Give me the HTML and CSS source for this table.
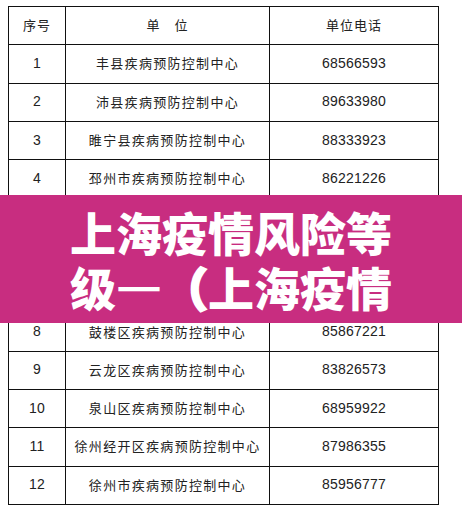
FILE: index.html
```html
<!DOCTYPE html>
<html lang="zh-CN">
<head>
<meta charset="utf-8">
<link rel="stylesheet" href="styles.css">
</head>
<body>
<div class="page">
  <table class="units">
    <colgroup>
      <col class="c-no">
      <col class="c-name">
      <col class="c-tel">
    </colgroup>
    <tr><th>序号</th><th>单　位</th><th>单位电话</th></tr>
    <tr><td class="num">1</td><td class="name">丰县疾病预防控制中心</td><td class="num">68566593</td></tr>
    <tr><td class="num">2</td><td class="name">沛县疾病预防控制中心</td><td class="num">89633980</td></tr>
    <tr><td class="num">3</td><td class="name">睢宁县疾病预防控制中心</td><td class="num">88333923</td></tr>
    <tr><td class="num">4</td><td class="name">邳州市疾病预防控制中心</td><td class="num">86221226</td></tr>
    <tr><td class="num"></td><td class="name"></td><td class="num"></td></tr>
    <tr><td class="num"></td><td class="name"></td><td class="num"></td></tr>
    <tr><td class="num"></td><td class="name"></td><td class="num"></td></tr>
    <tr><td class="num">8</td><td class="name">鼓楼区疾病预防控制中心</td><td class="num">85867221</td></tr>
    <tr><td class="num">9</td><td class="name">云龙区疾病预防控制中心</td><td class="num">83826573</td></tr>
    <tr><td class="num">10</td><td class="name">泉山区疾病预防控制中心</td><td class="num">68959922</td></tr>
    <tr><td class="num">11</td><td class="name">徐州经开区疾病预防控制中心</td><td class="num">87986355</td></tr>
    <tr><td class="num">12</td><td class="name">徐州市疾病预防控制中心</td><td class="num">85956777</td></tr>
  </table>
  <div class="banner">
    <p class="title">上海疫情风险等<br>级<span class="punct">—（</span>上海疫情</p>
  </div>
</div>
</body>
</html>
```

FILE: styles.css
```css
html, body {
  margin: 0;
  padding: 0;
  background: #ffffff;
}

.page {
  position: relative;
  width: 462px;
  height: 521px;
  overflow: hidden;
  padding: 6px 0 0 8px;
  box-sizing: border-box;
  font-family: "Liberation Sans", "Noto Sans CJK SC", sans-serif;
  color: #222222;
}

.units {
  border-collapse: collapse;
  table-layout: fixed;
  width: 430px;
}

.c-no { width: 57px; }
.c-name { width: 204px; }
.c-tel { width: 169px; }

.units tr {
  height: 38.3px;
}

.units th,
.units td {
  border: 1px solid #111111;
  padding: 0 0 2px 0;
  text-align: center;
  vertical-align: middle;
  font-weight: normal;
}

.units th {
  font-size: 13px;
  letter-spacing: 1px;
  font-family: "Noto Sans CJK SC", sans-serif;
}

.units td.name {
  font-family: "Noto Sans CJK SC", sans-serif;
  font-size: 13px;
  letter-spacing: 1.3px;
}

.units td.num {
  font-size: 14px;
  letter-spacing: 0.2px;
}

.banner {
  position: absolute;
  left: 0;
  top: 195px;
  width: 462px;
  height: 128px;
  box-sizing: border-box;
  padding-top: 9px;
  background: #c82d80;
  display: flex;
  justify-content: center;
}

.banner .title {
  margin: 0;
  font-family: "Noto Sans CJK SC", sans-serif;
  font-weight: 900;
  font-size: 46px;
  line-height: 55px;
  color: #ffffff;
  white-space: nowrap;
  text-align: left;
}

.banner .punct {
  -webkit-text-stroke: 2px #ffffff;
}
```
